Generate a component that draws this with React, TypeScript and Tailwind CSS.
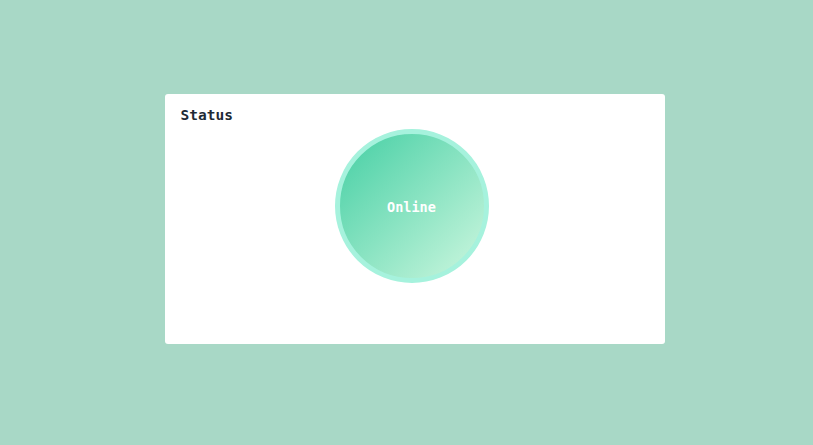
export default function App() {
  return (
    <div className="min-h-screen w-full bg-[#a8d8c6] flex items-center justify-center pl-4 pb-2 font-['DejaVu_Sans_Mono',monospace]">
      <div className="w-[500px] h-[250px] bg-white rounded-[3px] px-4 pt-[11px] flex flex-col">
        <h2 className="text-[14.5px] leading-5 font-bold text-[#1e2a36]">Status</h2>
        <div className="flex justify-center pr-[6px] mt-[4px]">
          <div className="w-[154px] h-[154px] rounded-full border-[5px] border-[#a6f2dd] bg-linear-to-br/srgb from-[#45cfa4] to-[#cdf7df] flex items-center justify-center">
            <span className="text-white text-[13.5px] font-bold mt-[3px]">Online</span>
          </div>
        </div>
      </div>
    </div>
  );
}
